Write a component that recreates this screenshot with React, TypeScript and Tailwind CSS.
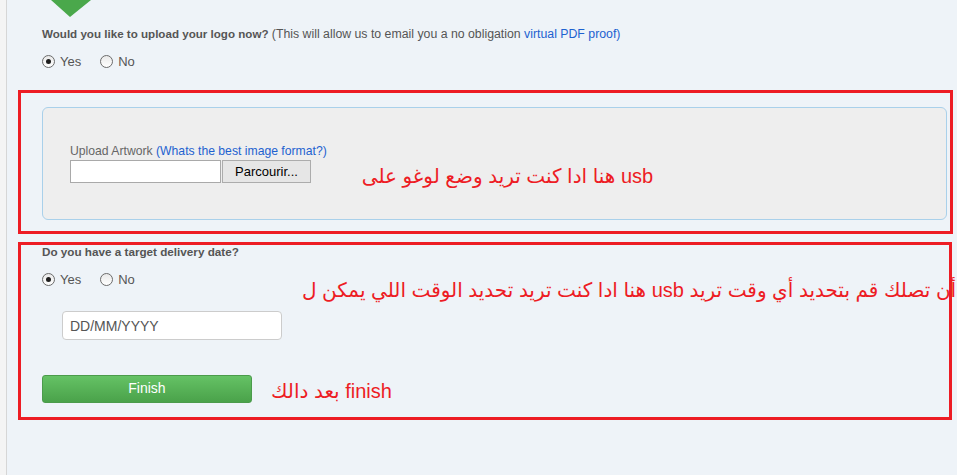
import React from "react";

const font = { fontFamily: '"Liberation Sans", Arial, "DejaVu Sans", sans-serif' };

const Radio: React.FC<{ checked?: boolean; label: string }> = ({ checked, label }) => (
  <label className="flex items-center text-[13px] leading-[15px] text-[#555]">
    <span className="w-[13px] h-[13px] rounded-full border border-[#6b6b6b] bg-gradient-to-b from-[#e9e9e9] to-white flex items-center justify-center">
      {checked && <span className="w-[5px] h-[5px] rounded-full bg-[#1e1e1e]" />}
    </span>
    <span className="ml-[5px]">{label}</span>
  </label>
);

const YesNo: React.FC = () => (
  <div className="flex items-center gap-[19px]">
    <Radio checked label="Yes" />
    <Radio label="No" />
  </div>
);

const App: React.FC = () => {
  return (
    <div className="w-[957px] h-[475px] flex bg-[#f4f4f4] overflow-hidden" style={font}>
      <div className="w-[6px] shrink-0" />
      <main className="flex-1 h-full bg-[#eef3f8] border-l border-[#d6d6d6]">
        {/* green step marker */}
        <svg width="40" height="17" viewBox="0 0 40 17" className="ml-[44px] block">
          <polygon points="0,0 40,0 19,17" fill="#4aa84b" />
        </svg>

        {/* logo question */}
        <div className="ml-[35px] mt-[10px]">
          <p className="text-[12px] leading-[14px] text-[#555]">
            <b className="text-[11.6px]">Would you like to upload your logo now?</b>{" "}
            <span className="text-[12.3px]">
              (This will allow us to email you a no obligation{" "}
              <a href="#" className="text-[#1d62d0]">virtual PDF proof)</a>
            </span>
          </p>
          <div className="mt-[13px]">
            <YesNo />
          </div>
        </div>

        {/* upload box */}
        <div className="ml-[11px] mt-[21px] w-[935px] h-[144px] border-[3px] border-[#ed1c24] pt-[14px] pl-[21px] pr-[3px]">
          <div className="h-[113px] rounded-[6px] border border-[#a9d0ea] bg-[#eeeeee] pl-[27px] flex items-center">
            <div>
              <p className="text-[12.2px] leading-[14px] text-[#666]">
                Upload Artwork <a href="#" className="text-[#1d62d0]">(Whats the best image format?)</a>
              </p>
              <div className="flex mt-[2px]">
                <div className="w-[151px] h-[23px] bg-white border border-[#a9a9a9]" />
                <button className="ml-[1px] w-[89px] h-[23px] bg-[#e6e6e6] border border-[#acacac] text-[13px] text-black">
                  Parcourir...
                </button>
              </div>
            </div>
            <div className="ml-[35px] pt-[24px] text-[20px] leading-[24px] text-[#ed1c24]">
              هنا ادا كنت تريد وضع لوغو على usb
            </div>
          </div>
        </div>

        {/* delivery date box */}
        <div className="ml-[11px] mt-[8px] w-[934px] h-[178px] border-[3px] border-[#ed1c24] pl-[21px] pr-[2px]">
          <p className="text-[11.7px] leading-[14px] font-bold text-[#555]">Do you have a target delivery date?</p>
          <div className="flex mt-[13px]">
            <div className="w-[260px] shrink-0">
              <YesNo />
              <input
                placeholder="DD/MM/YYYY"
                className="mt-[24px] ml-[20px] w-[220px] h-[29px] rounded-[4px] border border-[#cccccc] bg-white px-[7px] text-[14px] text-[#555] placeholder:text-[#555] outline-none"
              />
            </div>
            <div dir="rtl" className="flex-1 pt-[6px] text-[20px] leading-[24px] text-[#ed1c24] text-right whitespace-nowrap">
              أن تصلك قم بتحديد أي وقت تريد usb هنا ادا كنت تريد تحديد الوقت اللي يمكن ل
            </div>
          </div>
          <div className="flex items-center mt-[34px]">
            <button className="w-[210px] h-[28px] rounded-[3px] border border-[#4b9b4b] bg-gradient-to-b from-[#65c265] to-[#4aa24a] text-white text-[14px]">
              Finish
            </button>
            <span className="ml-[19px] mt-[5px] text-[20px] leading-[24px] text-[#ed1c24]">بعد دالك finish</span>
          </div>
        </div>
      </main>
    </div>
  );
};

export default App;
